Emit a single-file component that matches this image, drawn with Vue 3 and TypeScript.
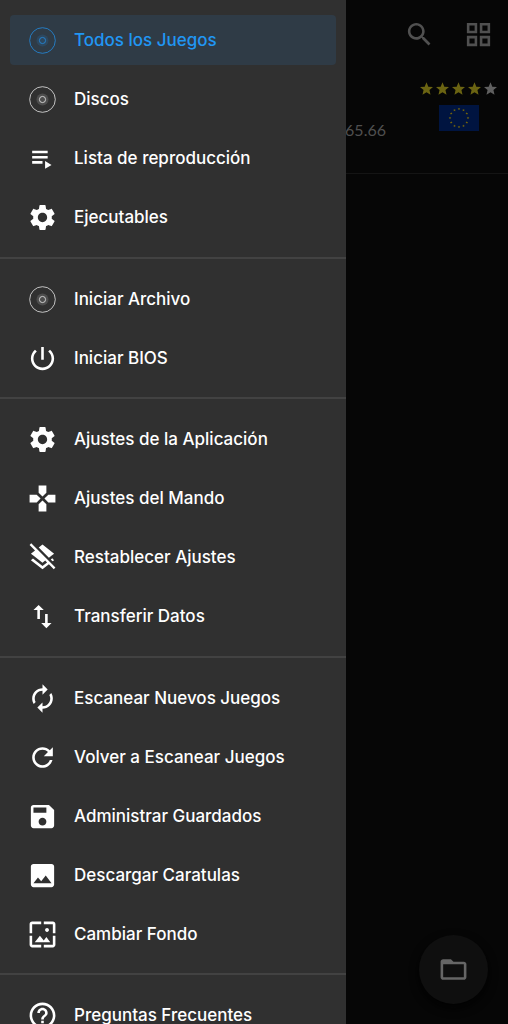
<script setup lang="ts">
import { ref } from 'vue'

type IconName =
  | 'disc' | 'playlist' | 'gear' | 'power' | 'gamepad' | 'layersClear' | 'swap'
  | 'autorenew' | 'refresh' | 'save' | 'image' | 'wallpaper' | 'help'

interface MenuItem {
  id: string
  label: string
  icon: IconName
}

const paths: Record<Exclude<IconName, 'disc'>, string> = {
  playlist: 'M4 10h12v2H4zm0-4h12v2H4zm0 8h8v2H4zm10 0v6l5-3z',
  gear: 'M19.14,12.94c0.04-0.3,0.06-0.61,0.06-0.94c0-0.32-0.02-0.64-0.07-0.94l2.03-1.58c0.18-0.14,0.23-0.41,0.12-0.61l-1.92-3.32c-0.12-0.22-0.37-0.29-0.59-0.22l-2.39,0.96c-0.5-0.38-1.03-0.7-1.62-0.94L14.4,2.81c-0.04-0.24-0.24-0.41-0.48-0.41h-3.84c-0.24,0-0.43,0.17-0.47,0.41L9.25,5.35C8.66,5.59,8.12,5.92,7.63,6.29L5.24,5.33c-0.22-0.08-0.47,0-0.59,0.22L2.74,8.87C2.62,9.08,2.66,9.34,2.86,9.48l2.03,1.58C4.84,11.36,4.8,11.69,4.8,12s0.02,0.64,0.07,0.94l-2.03,1.58c-0.18,0.14-0.23,0.41-0.12,0.61l1.92,3.32c0.12,0.22,0.37,0.29,0.59,0.22l2.39-0.96c0.5,0.38,1.03,0.7,1.62,0.94l0.36,2.54c0.05,0.24,0.24,0.41,0.48,0.41h3.84c0.24,0,0.44-0.17,0.47-0.41l0.36-2.54c0.59-0.24,1.13-0.56,1.62-0.94l2.39,0.96c0.22,0.08,0.47,0,0.59-0.22l1.92-3.32c0.12-0.22,0.07-0.47-0.12-0.61L19.14,12.94z M12,15.6c-1.98,0-3.6-1.62-3.6-3.6s1.62-3.6,3.6-3.6s3.6,1.62,3.6,3.6S13.98,15.6,12,15.6z',
  power: 'M13 3h-2v10h2V3zm4.83 2.17l-1.42 1.42C17.99 7.86 19 9.81 19 12c0 3.87-3.13 7-7 7s-7-3.13-7-7c0-2.19 1.01-4.14 2.58-5.42L6.17 5.17C4.23 6.82 3 9.26 3 12c0 4.97 4.03 9 9 9s9-4.03 9-9c0-2.74-1.23-5.18-3.17-6.83z',
  gamepad: 'M15 7.5V2H9v5.5l3 3 3-3zM7.5 9H2v6h5.5l3-3-3-3zM9 16.5V22h6v-5.5l-3-3-3 3zM16.5 9l-3 3 3 3H22V9h-5.5z',
  layersClear: 'M19.81 14.99l1.19-.92-1.43-1.43-1.19.92 1.43 1.43zm-.45-4.72L21 9l-9-7-2.91 2.27 7.87 7.88 2.4-1.88zM3.27 1L2 2.27l4.22 4.22L3 9l1.63 1.27L12 16l2.1-1.63 1.43 1.43L12 18.54l-7.37-5.73L3 14.07l9 7 4.95-3.85L20.73 21 22 19.73 3.27 1z',
  swap: 'M16 17.01V10h-2v7.01h-3L15 21l4-3.99h-3zM9 3L5 6.99h3V14h2V6.99h3L9 3z',
  autorenew: 'M12 6v3l4-4-4-4v3c-4.42 0-8 3.58-8 8 0 1.57.46 3.03 1.24 4.26L6.7 14.8c-.45-.83-.7-1.79-.7-2.8 0-3.31 2.69-6 6-6zm6.76 1.74L17.3 9.2c.44.84.7 1.79.7 2.8 0 3.31-2.69 6-6 6v-3l-4 4 4 4v-3c4.42 0 8-3.58 8-8 0-1.57-.46-3.03-1.24-4.26z',
  refresh: 'M17.65 6.35C16.2 4.9 14.21 4 12 4c-4.42 0-7.99 3.58-7.99 8s3.57 8 7.99 8c3.73 0 6.84-2.55 7.73-6h-2.08c-.82 2.33-3.04 4-5.65 4-3.31 0-6-2.69-6-6s2.69-6 6-6c1.66 0 3.14.69 4.22 1.78L13 11h7V4l-2.35 2.35z',
  save: 'M17 3H5c-1.11 0-2 .9-2 2v14c0 1.1.89 2 2 2h14c1.1 0 2-.9 2-2V7l-4-4zm-5 16c-1.66 0-3-1.34-3-3s1.34-3 3-3 3 1.34 3 3-1.34 3-3 3zm3-10H5V5h10v4z',
  image: 'M21 19V5c0-1.1-.9-2-2-2H5c-1.1 0-2 .9-2 2v14c0 1.1.9 2 2 2h14c1.1 0 2-.9 2-2zM8.5 13.5l2.5 3.01L14.5 12l4.5 6H5l3.5-4.5z',
  wallpaper: 'M4 4h7V2H4c-1.1 0-2 .9-2 2v7h2V4zm6 9l-4 5h12l-3-4-2.03 2.71L10 13zm7-4.5c0-.83-.67-1.5-1.5-1.5S14 7.67 14 8.5s.67 1.5 1.5 1.5S17 9.33 17 8.5zM20 2h-7v2h7v7h2V4c0-1.1-.9-2-2-2zm0 18h-7v2h7c1.1 0 2-.9 2-2v-7h-2v7zM4 13H2v7c0 1.1.9 2 2 2h7v-2H4v-7z',
  help: 'M11 18h2v-2h-2v2zm1-16C6.48 2 2 6.48 2 12s4.48 10 10 10 10-4.48 10-10S17.52 2 12 2zm0 18c-4.41 0-8-3.59-8-8s3.59-8 8-8 8 3.59 8 8-3.59 8-8 8zm0-14c-2.21 0-4 1.79-4 4h2c0-1.1.9-2 2-2s2 .9 2 2c0 2-3 1.75-3 5h2c0-2.25 3-2.5 3-5 0-2.21-1.79-4-4-4z',
}

const groups: MenuItem[][] = [
  [
    { id: 'all', label: 'Todos los Juegos', icon: 'disc' },
    { id: 'discs', label: 'Discos', icon: 'disc' },
    { id: 'playlist', label: 'Lista de reproducción', icon: 'playlist' },
    { id: 'executables', label: 'Ejecutables', icon: 'gear' },
  ],
  [
    { id: 'start-file', label: 'Iniciar Archivo', icon: 'disc' },
    { id: 'start-bios', label: 'Iniciar BIOS', icon: 'power' },
  ],
  [
    { id: 'app-settings', label: 'Ajustes de la Aplicación', icon: 'gear' },
    { id: 'pad-settings', label: 'Ajustes del Mando', icon: 'gamepad' },
    { id: 'reset', label: 'Restablecer Ajustes', icon: 'layersClear' },
    { id: 'transfer', label: 'Transferir Datos', icon: 'swap' },
  ],
  [
    { id: 'scan', label: 'Escanear Nuevos Juegos', icon: 'autorenew' },
    { id: 'rescan', label: 'Volver a Escanear Juegos', icon: 'refresh' },
    { id: 'saves', label: 'Administrar Guardados', icon: 'save' },
    { id: 'covers', label: 'Descargar Caratulas', icon: 'image' },
    { id: 'background', label: 'Cambiar Fondo', icon: 'wallpaper' },
  ],
  [{ id: 'faq', label: 'Preguntas Frecuentes', icon: 'help' }],
]

const selected = ref('all')
const rating = 4

const flagStars = Array.from({ length: 12 }, (_, i) => {
  const angle = (i * Math.PI) / 6
  return { x: 20 + 9 * Math.sin(angle), y: 13 - 9 * Math.cos(angle) }
})
</script>

<template>
  <div class="app">
    <main class="library">
      <header class="toolbar">
        <button type="button" class="tool" aria-label="Buscar">
          <svg class="icon" viewBox="0 0 24 24" aria-hidden="true">
            <path d="M15.5 14h-.79l-.28-.27C15.41 12.59 16 11.11 16 9.5 16 5.91 13.09 3 9.5 3S3 5.91 3 9.5 5.91 16 9.5 16c1.61 0 3.09-.59 4.23-1.57l.27.28v.79l5 4.99L20.49 19l-4.99-5zm-6 0C7.01 14 5 11.99 5 9.5S7.01 5 9.5 5 14 7.01 14 9.5 11.99 14 9.5 14z" />
          </svg>
        </button>
        <button type="button" class="tool" aria-label="Cuadrícula">
          <svg class="icon" viewBox="0 0 24 24" aria-hidden="true">
            <path fill-rule="evenodd" d="M3 3v8h8V3H3zm6 6H5V5h4v4zm-6 4v8h8v-8H3zm6 6H5v-4h4v4zm4-16v8h8V3h-8zm6 6h-4V5h4v4zm-6 4v8h8v-8h-8zm6 6h-4v-4h4v4z" />
          </svg>
        </button>
      </header>
      <article class="game">
        <span class="code">65.66</span>
        <div class="meta">
          <div class="stars" role="img" :aria-label="`${rating} / 5`">
            <svg v-for="n in 5" :key="n" class="star" :class="{ lit: n <= rating }" viewBox="2 2 20 19" aria-hidden="true">
              <path d="M12 17.27L18.18 21l-1.64-7.03L22 9.24l-7.19-.61L12 2 9.19 8.63 2 9.24l5.46 4.73L5.82 21z" />
            </svg>
          </div>
          <svg class="flag" viewBox="0 0 40 26" aria-hidden="true">
            <rect width="40" height="26" fill="#001440" />
            <path
              v-for="(s, i) in flagStars"
              :key="i"
              :transform="`translate(${s.x} ${s.y})`"
              d="M0-1.3L.4-.4 1.3-.4.6.2.8 1.1 0 .6-.8 1.1-.6.2-1.3-.4-.4-.4z"
              fill="#7a6a08"
            />
          </svg>
        </div>
      </article>
      <button type="button" class="fab" aria-label="Abrir carpeta">
        <svg class="icon" viewBox="0 0 24 24" aria-hidden="true">
          <path d="M20 6h-8l-2-2H4c-1.1 0-1.99.9-1.99 2L2 18c0 1.1.9 2 2 2h16c1.1 0 2-.9 2-2V8c0-1.1-.9-2-2-2zm0 12H4V8h16v10z" />
        </svg>
      </button>
    </main>

    <nav class="drawer">
      <ul v-for="(group, g) in groups" :key="g" class="group">
        <li v-for="item in group" :key="item.id">
          <button
            type="button"
            class="entry"
            :class="{ active: item.id === selected }"
            :aria-current="item.id === selected ? 'page' : undefined"
            @click="selected = item.id"
          >
            <svg v-if="item.icon === 'disc'" class="icon" viewBox="0 0 31 31" aria-hidden="true">
              <circle cx="15.5" cy="15.5" r="6" opacity="0.14" />
              <circle cx="15.5" cy="15.5" r="12.8" class="ring" />
              <circle cx="15.5" cy="15.5" r="3.1" class="ring" />
            </svg>
            <svg v-else class="icon" viewBox="0 0 24 24" aria-hidden="true">
              <path :d="paths[item.icon]" />
            </svg>
            <span>{{ item.label }}</span>
          </button>
        </li>
      </ul>
    </nav>
  </div>
</template>

<style>
body {
  margin: 0;
  background: #060606;
}
</style>

<style scoped>
.app {
  height: 100vh;
  overflow: hidden;
  background: #060606;
  color: #ffffff;
  font-family: Inter, "Open Sans", sans-serif;
}

button {
  border: 0;
  padding: 0;
  background: none;
  color: inherit;
  font: inherit;
  cursor: pointer;
}

.icon {
  display: block;
  flex: none;
  width: 31px;
  height: 31px;
  fill: currentColor;
}

.toolbar {
  display: flex;
  justify-content: flex-end;
  gap: 28px;
  padding: 19px 14px;
  color: #505050;
}

.game {
  display: flex;
  justify-content: flex-end;
  gap: 34px;
  height: 91px;
  padding: 13px 11px 0 0;
  border-bottom: 1px solid #141414;
}

.code {
  padding-top: 38px;
  color: #505050;
  font-family: Lato, sans-serif;
  font-size: 16px;
  line-height: 20px;
}

.meta {
  display: flex;
  flex-direction: column;
  align-items: center;
  gap: 10px;
}

.stars {
  display: flex;
  gap: 3px;
}

.star {
  width: 13px;
  height: 13px;
  fill: #606060;
}

.star.lit {
  fill: #6b6412;
}

.flag {
  width: 40px;
  height: 26px;
}

.fab {
  position: fixed;
  right: 20px;
  bottom: 20px;
  display: grid;
  place-items: center;
  width: 69px;
  height: 69px;
  border-radius: 50%;
  background: #0f0f0f;
  color: #666666;
  box-shadow: 0 4px 10px #020202;
}

.drawer {
  position: fixed;
  top: 0;
  bottom: 0;
  left: 0;
  box-sizing: border-box;
  width: 346px;
  max-width: 85%;
  overflow-y: auto;
  scrollbar-width: none;
  background: #303030;
}

.group {
  display: grid;
  gap: 9px;
  margin: 0;
  padding: 15px 10px;
  list-style: none;
}

.group:nth-child(even) {
  padding-bottom: 14px;
}

.group + .group {
  border-top: 2px solid #424242;
}

.entry {
  display: flex;
  align-items: center;
  gap: 16px;
  width: 100%;
  height: 50px;
  padding: 0 17px;
  border-radius: 4px;
  font-size: 17px;
  font-weight: 500;
  line-height: 24px;
  text-align: left;
  white-space: nowrap;
}

.entry.active {
  background: #2f3b46;
  color: #2196f3;
}

.ring {
  fill: none;
  stroke: currentColor;
  stroke-width: 1;
  opacity: 0.7;
}
</style>
